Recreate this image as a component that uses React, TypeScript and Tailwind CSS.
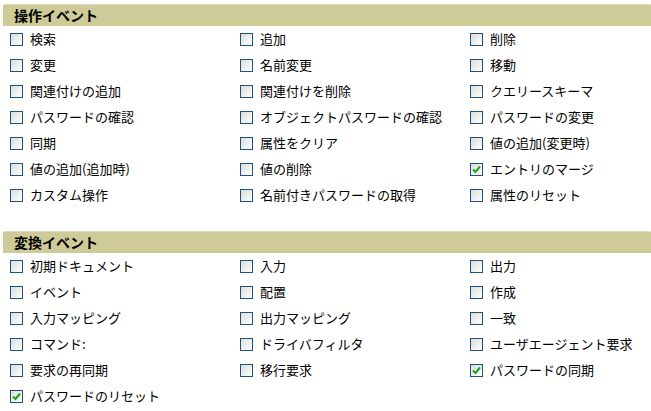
const ops: [string, boolean][] = [
  ['検索', false], ['追加', false], ['削除', false],
  ['変更', false], ['名前変更', false], ['移動', false],
  ['関連付けの追加', false], ['関連付けを削除', false], ['クエリースキーマ', false],
  ['パスワードの確認', false], ['オブジェクトパスワードの確認', false], ['パスワードの変更', false],
  ['同期', false], ['属性をクリア', false], ['値の追加(変更時)', false],
  ['値の追加(追加時)', false], ['値の削除', false], ['エントリのマージ', true],
  ['カスタム操作', false], ['名前付きパスワードの取得', false], ['属性のリセット', false],
];

const conv: [string, boolean][] = [
  ['初期ドキュメント', false], ['入力', false], ['出力', false],
  ['イベント', false], ['配置', false], ['作成', false],
  ['入力マッピング', false], ['出力マッピング', false], ['一致', false],
  ['コマンド:', false], ['ドライバフィルタ', false], ['ユーザエージェント要求', false],
  ['要求の再同期', false], ['移行要求', false], ['パスワードの同期', true],
  ['パスワードのリセット', true],
];

function Box({ checked }: { checked: boolean }) {
  return (
    <span className="w-[13px] h-[13px] border border-[#1c5180] bg-gradient-to-br from-[#dcdcd7] to-white flex items-center justify-center flex-shrink-0">
      {checked && (
        <svg width="9" height="9" viewBox="0 0 9 9">
          <path d="M1 4.5 L3.5 7 L8 1.5" stroke="#21a121" strokeWidth="2" fill="none" />
        </svg>
      )}
    </span>
  );
}

function Section({ title, items }: { title: string; items: [string, boolean][] }) {
  return (
    <section>
      <h2 className="h-[22px] bg-[#cfcb98] pl-[11px] flex items-center text-[14px] font-bold text-black border-t border-dotted border-[#f1efd9]">
        {title}
      </h2>
      <div className="grid grid-cols-[230px_230px_1fr]">
        {items.map(([label, checked]) => (
          <label key={label} className="h-[26px] pl-[7px] flex items-center gap-[7px] text-[13px] text-black">
            <Box checked={checked} />
            <span>{label}</span>
          </label>
        ))}
      </div>
    </section>
  );
}

export default function App() {
  return (
    <div
      className="w-[651px] h-[411px] bg-white pt-[4px] pl-[3px] overflow-hidden flex flex-col gap-[23px]"
      style={{ fontFamily: '"Noto Sans CJK JP", "Noto Sans", sans-serif' }}
    >
      <Section title="操作イベント" items={ops} />
      <Section title="変換イベント" items={conv} />
    </div>
  );
}
